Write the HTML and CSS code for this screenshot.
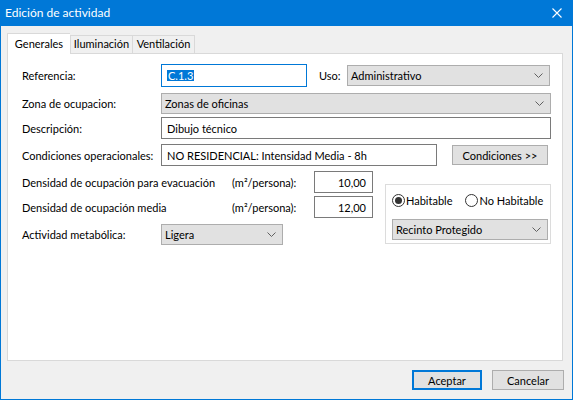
FILE: index.html
```html
<!DOCTYPE html>
<html lang="es">
<head>
<meta charset="utf-8">
<title>Edición de actividad</title>
<link rel="stylesheet" href="styles.css">
</head>
<body>
<div class="window">
  <div class="titlebar">
    <span class="title">Edición de actividad</span>
    <svg class="close" width="10" height="10" viewBox="0 0 10 10"><path d="M0.5 0.5 L9.5 9.5 M9.5 0.5 L0.5 9.5" stroke="#fff" stroke-width="1.1" fill="none"/></svg>
  </div>
  <div class="client">
    <div class="tabs">
      <div class="tab active">Generales</div>
      <div class="tab t-ilu">Iluminación</div>
      <div class="tab t-ven">Ventilación</div>
    </div>
    <div class="panel">
      <div class="row r1">
        <span class="lbl">Referencia:</span>
        <div class="field w-ref focus"><span class="sel">C.1.3</span></div>
        <span class="lbl-uso">Uso:</span>
        <div class="combo w-uso"><span>Administrativo</span><svg class="chev" width="9" height="5" viewBox="0 0 9 5"><path d="M0.5 0.5 L4.5 4.5 L8.5 0.5" stroke="#606060" fill="none"/></svg></div>
      </div>
      <div class="row r2">
        <span class="lbl">Zona de ocupacion:</span>
        <div class="combo w-full"><span>Zonas de oficinas</span><svg class="chev" width="9" height="5" viewBox="0 0 9 5"><path d="M0.5 0.5 L4.5 4.5 L8.5 0.5" stroke="#606060" fill="none"/></svg></div>
      </div>
      <div class="row r3">
        <span class="lbl">Descripción:</span>
        <div class="field w-full">Dibujo técnico</div>
      </div>
      <div class="row r4">
        <span class="lbl">Condiciones operacionales:</span>
        <div class="field w-cond">NO RESIDENCIAL: Intensidad Media - 8h</div>
        <button class="btn btn-cond">Condiciones &gt;&gt;</button>
      </div>
      <div class="bottom">
        <div class="leftcol">
          <div class="row r5">
            <span class="lbl-long">Densidad de ocupación para evacuación</span>
            <span class="unit">(m²/persona):</span>
            <div class="field num">10,00</div>
          </div>
          <div class="row r6">
            <span class="lbl-long">Densidad de ocupación media</span>
            <span class="unit">(m²/persona):</span>
            <div class="field num">12,00</div>
          </div>
          <div class="row r7">
            <span class="lbl">Actividad metabólica:</span>
            <div class="combo w-act"><span>Ligera</span><svg class="chev" width="9" height="5" viewBox="0 0 9 5"><path d="M0.5 0.5 L4.5 4.5 L8.5 0.5" stroke="#606060" fill="none"/></svg></div>
          </div>
        </div>
        <div class="group">
          <div class="radios">
            <label class="radio"><span class="dot checked"></span>Habitable</label>
            <label class="radio"><span class="dot"></span>No Habitable</label>
          </div>
          <div class="combo w-rec"><span>Recinto Protegido</span><svg class="chev" width="9" height="5" viewBox="0 0 9 5"><path d="M0.5 0.5 L4.5 4.5 L8.5 0.5" stroke="#606060" fill="none"/></svg></div>
        </div>
      </div>
    </div>
    <div class="footer">
      <button class="btn btn-ok">Aceptar</button>
      <button class="btn btn-cancel">Cancelar</button>
    </div>
  </div>
</div>
</body>
</html>
```

FILE: styles.css
```css
* { box-sizing: border-box; }
html, body { margin: 0; padding: 0; }
body {
  font-family: Lato, "Noto Sans", sans-serif;
  font-size: 11px;
  color: #000;
  background: #fff;
}
.window {
  width: 573px;
  height: 400px;
  border: 1px solid #0078d7;
  border-top: none;
  background: #f0f0f0;
  display: flex;
  flex-direction: column;
}
.titlebar {
  height: 26px;
  margin: 0 -1px;
  background: #0078d7;
  color: #fff;
  display: flex;
  align-items: center;
  justify-content: space-between;
  padding: 0 11px 0 5px;
}
.title { font-size: 12px; line-height: 16px; }
.close { display: block; }
.client {
  flex: 1;
  padding: 7px 7px 0 6px;
}
.tabs {
  display: flex;
  align-items: flex-end;
  height: 20px;
}
.tab {
  height: 18px;
  border: 1px solid #d9d9d9;
  border-bottom: none;
  background: #f0f0f0;
  line-height: 16px;
  text-align: center;
  white-space: nowrap;
}
.tab.active {
  position: relative;
  z-index: 1;
  height: 21px;
  margin-bottom: -1px;
  width: 63px;
  background: #fff;
  border-right: none;
  line-height: 19px;
}
.t-ilu { width: 63px; }
.t-ven { width: 62px; border-left: none; }
.panel {
  width: 556px;
  height: 308px;
  background: #fff;
  border: 1px solid #d9d9d9;
  padding: 10px 11px 0 14px;
}
.row {
  display: flex;
  align-items: center;
  height: 22px;
  white-space: nowrap;
}
.r1 { height: 23px; }
.r2 { margin-top: 5px; }
.r3 { margin-top: 3px; }
.r4 { margin-top: 5px; }
.r5 { margin-top: 5px; }
.r6 { margin-top: 3px; }
.r7 { margin-top: 6px; height: 21px; }
.lbl { width: 139px; flex: none; }
.lbl-uso { width: 28px; margin-left: 12px; flex: none; }
.lbl-long { width: 210px; flex: none; }
.unit { width: 82px; flex: none; }
.field {
  height: 100%;
  border: 1px solid #7a7a7a;
  background: #fff;
  padding: 0 5px;
  display: flex;
  align-items: center;
  white-space: nowrap;
  overflow: hidden;
}
.field.focus { border-color: #0078d7; }
.sel {
  background: #0078d7;
  color: #fff;
  line-height: 11px;
  padding: 0 1px;
}
.w-ref { width: 146px; }
.w-full { width: 390px; }
.w-cond { width: 276px; }
.num { width: 59px; justify-content: flex-end; padding-right: 6px; }
.combo {
  height: 100%;
  border: 1px solid #adadad;
  background: #e1e1e1;
  display: flex;
  align-items: center;
  justify-content: space-between;
  padding: 0 6px 0 3px;
}
.w-uso { width: 203px; height: 21px; }
.r2 .combo { height: 21px; }
.w-act { width: 122px; }
.w-rec { width: 156px; height: 21px; }
.chev { display: block; }
.btn {
  font-family: inherit;
  font-size: 11px;
  color: #000;
  background: #e1e1e1;
  border: 1px solid #adadad;
  height: 20px;
  padding: 0;
  margin: 0;
}
.btn-cond { width: 96px; margin-left: 15px; }
.bottom { display: flex; }
.leftcol { width: 351px; flex: none; }
.group {
  margin-left: 12px;
  margin-top: 18px;
  width: 167px;
  height: 60px;
  border: 1px solid #dcdcdc;
  padding: 0 0 0 6px;
}
.radios {
  display: flex;
  align-items: center;
  height: 28px;
  padding-top: 2px;
}
.radio { display: flex; align-items: center; }
.radio + .radio { margin-left: 13px; }
.dot {
  width: 13px;
  height: 13px;
  border: 1px solid #333;
  border-radius: 50%;
  background: #fff;
  margin-right: 1px;
  display: flex;
  align-items: center;
  justify-content: center;
}
.dot.checked::after {
  content: "";
  width: 7px;
  height: 7px;
  border-radius: 50%;
  background: #333;
}
.group .combo { margin-top: 6px; }
.footer {
  display: flex;
  justify-content: flex-end;
  gap: 10px;
  margin-top: 9px;
  padding-right: 1px;
}
.btn-ok { width: 70px; border: 2px solid #0078d7; }
.btn-cancel { width: 72px; }
```
